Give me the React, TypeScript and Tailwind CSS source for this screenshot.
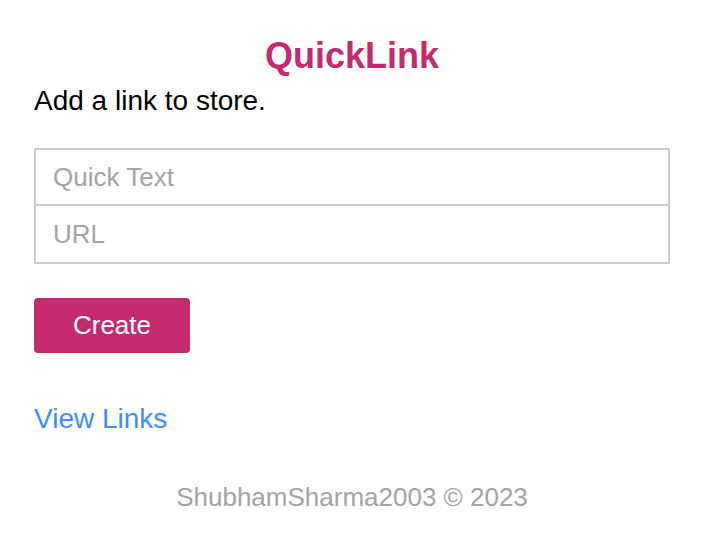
export default function App() {
  return (
    <div className="min-h-[546px] bg-white px-[34px] font-['Liberation_Sans',Arial,sans-serif]">
      <h1 className="pt-[38px] text-center text-[36px] font-bold leading-none text-[#c42a6e]">
        QuickLink
      </h1>
      <p className="mt-[13px] text-[28px] leading-none text-black">Add a link to store.</p>
      <form className="mt-[33px] flex flex-col">
        <input
          type="text"
          placeholder="Quick Text"
          className="h-[58px] w-full border-2 border-[#cccccc] px-[17px] text-[26px] outline-none placeholder:text-[#a3a3a3]"
        />
        <input
          type="text"
          placeholder="URL"
          className="h-[58px] w-full border-2 border-t-0 border-[#cccccc] px-[17px] text-[26px] outline-none placeholder:text-[#a3a3a3]"
        />
        <button
          type="button"
          className="mt-[34px] h-[55px] w-[156px] rounded-[4px] bg-[#c42a6e] text-[26px] text-white"
        >
          Create
        </button>
      </form>
      <a href="#" className="mt-[52px] block text-[28px] leading-none text-[#3f8ef2]">
        View Links
      </a>
      <p className="mt-[51px] text-center text-[26px] leading-none text-[#a3a3a3]">
        ShubhamSharma2003 © 2023
      </p>
    </div>
  );
}
